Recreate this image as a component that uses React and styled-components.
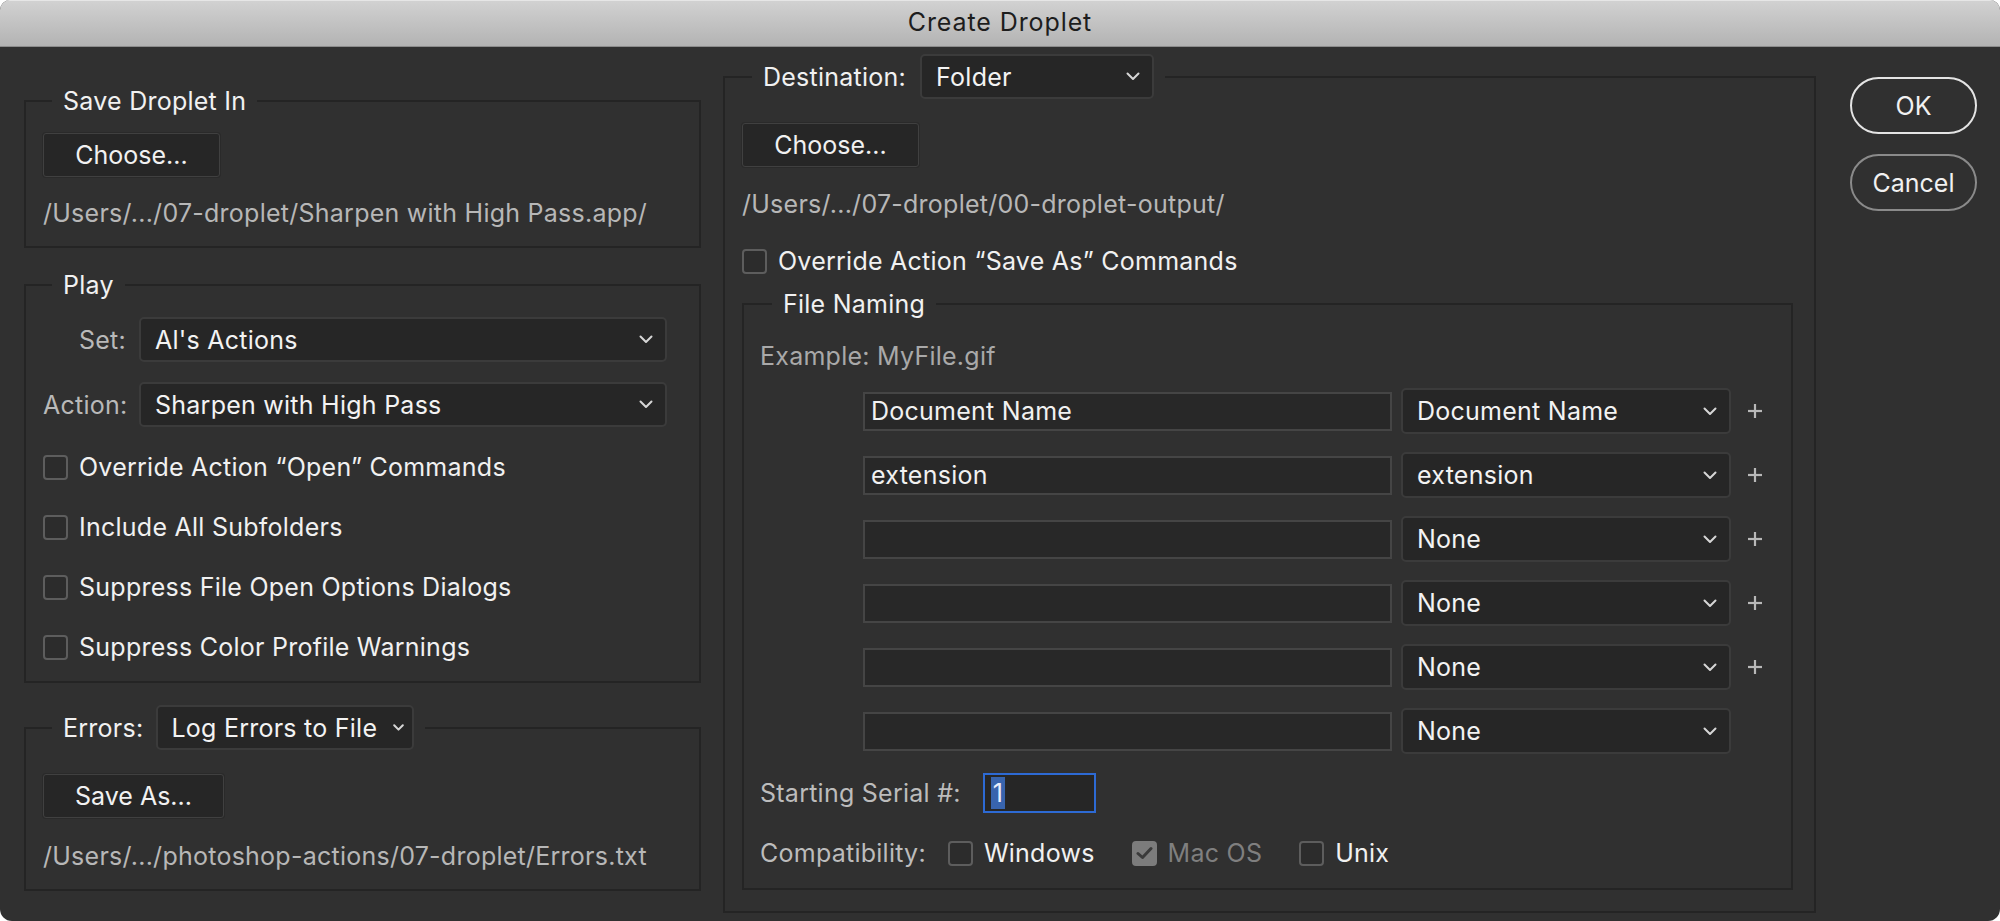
import React from "react";
import styled, { createGlobalStyle } from "styled-components";

const GlobalStyle = createGlobalStyle`
  html, body { margin: 0; padding: 0; background: #ffffff; }
  body { font-family: Inter, "Noto Sans", "Liberation Sans", sans-serif; }
  * { box-sizing: border-box; }
`;

const Window = styled.div`
  width: 2000px;
  height: 921px;
  display: flex;
  flex-direction: column;
  background: #303030;
  border-radius: 10px 10px 12px 12px;
  overflow: hidden;
  font-family: Inter, "Noto Sans", "Liberation Sans", sans-serif;
  font-size: 25px;
  letter-spacing: 0.25px;
  color: #f1f1f1;
`;

const TitleBar = styled.div`
  flex: none;
  height: 47px;
  display: flex;
  align-items: center;
  justify-content: center;
  background: linear-gradient(#d2d2d2, #b3b3b3);
  border-bottom: 1px solid #8c8c8c;
  box-shadow: inset 0 1px 0 #e6e6e6;
  color: #1d1d1d;
  font-size: 25px;
  letter-spacing: 0.9px;
  padding-bottom: 2px;
`;

const Body = styled.div`
  flex: 1;
  display: flex;
  align-items: flex-start;
  padding: 0 23px 0 24px;
`;

const LeftColumn = styled.div`
  width: 677px;
  padding-top: 39px;
  display: flex;
  flex-direction: column;
  gap: 22px;
`;

const MiddleColumn = styled.div`
  width: 1093px;
  margin-left: 22px;
  padding-top: 7px;
`;

const ActionColumn = styled.div`
  width: 127px;
  margin-left: 34px;
  padding-top: 30px;
  display: flex;
  flex-direction: column;
  gap: 20px;
`;

const Group = styled.fieldset`
  margin: 0;
  min-width: 0;
  border: 2px solid #242424;
  padding: ${(p) => p.$pad};
  display: flex;
  flex-direction: column;
  align-items: flex-start;
`;

const Legend = styled.legend`
  margin-left: ${(p) => p.$offset || "9px"};
  padding: 0 11px;
  height: ${(p) => p.$h || "30px"};
  line-height: 30px;
  display: flex;
  align-items: center;
  gap: ${(p) => p.$gap || "13px"};
  color: #f1f1f1;
`;

const PushButton = styled.button`
  width: ${(p) => p.$w}px;
  height: 44px;
  margin-top: ${(p) => p.$mt || 0}px;
  background: #262626;
  border: 1px solid #404040;
  box-shadow: 0 0 0 1px #2a2a2a;
  border-radius: 3px;
  color: #f1f1f1;
  font: inherit;
  padding: 0;
  cursor: default;
`;

const PathText = styled.div`
  margin-top: ${(p) => p.$mt}px;
  line-height: 30px;
  color: #b7b7b7;
  white-space: nowrap;
`;

const FormRow = styled.div`
  display: grid;
  grid-template-columns: 83px 528px;
  column-gap: 13px;
  align-items: center;
  margin-top: ${(p) => p.$mt || 0}px;
`;

const FieldLabel = styled.span`
  text-align: right;
  color: #b9b9b9;
  white-space: nowrap;
`;

const SelectBox = styled.div`
  width: ${(p) => p.$w}px;
  height: ${(p) => p.$h || 45}px;
  display: flex;
  align-items: center;
  justify-content: space-between;
  gap: 6px;
  padding: 0 ${(p) => p.$pr || 12}px 0 ${(p) => p.$pl || 14}px;
  background: #262626;
  border: 2px solid #3b3b3b;
  border-radius: 5px;
  color: #f3f3f3;
  white-space: nowrap;
`;

const Chevron = ({ small }) => (
  <svg
    width={small ? 11 : 14}
    height={small ? 7 : 9}
    viewBox={small ? "0 0 11 7" : "0 0 14 9"}
    fill="none"
    stroke="#d6d6d6"
    strokeWidth="2"
    strokeLinecap="round"
    strokeLinejoin="round"
    style={{ flex: "none" }}
  >
    {small ? (
      <polyline points="1.2,1.2 5.5,5.6 9.8,1.2" />
    ) : (
      <polyline points="1.5,1.5 7,7 12.5,1.5" />
    )}
  </svg>
);

const Select = ({ w, h, small, pr, pl, children }) => (
  <SelectBox $w={w} $h={h} $pr={pr} $pl={pl}>
    <span>{children}</span>
    <Chevron small={small} />
  </SelectBox>
);

const CheckList = styled.div`
  margin-top: 25px;
  display: flex;
  flex-direction: column;
  gap: 30px;
`;

const CheckRow = styled.label`
  display: flex;
  align-items: center;
  gap: 11px;
  height: 30px;
  margin-top: ${(p) => p.$mt || 0}px;
  color: ${(p) => (p.$dim ? "#7f7f7f" : "#f1f1f1")};
  white-space: nowrap;
`;

const Box = styled.span`
  flex: none;
  width: 25px;
  height: 25px;
  border-radius: 4px;
  border: 2px solid ${(p) => (p.$checked ? "#7c7c7c" : "#5d5d5d")};
  background: ${(p) => (p.$checked ? "#7c7c7c" : "#2c2c2c")};
  display: flex;
  align-items: center;
  justify-content: center;
`;

const Checkbox = ({ checked }) => (
  <Box $checked={checked}>
    {checked && (
      <svg width="17" height="14" viewBox="0 0 17 14" fill="none">
        <path
          d="M2 7.5 L6.5 11.5 L15 2.5"
          stroke="#3a3a3a"
          strokeWidth="3"
          strokeLinecap="round"
          strokeLinejoin="round"
        />
      </svg>
    )}
  </Box>
);

const NamingGroup = styled(Group)`
  width: 1051px;
  margin-top: 13px;
  align-self: stretch;
`;

const Example = styled.div`
  line-height: 30px;
  color: #a9a9a9;
`;

const NamingRows = styled.div`
  margin-top: 17px;
  margin-left: 103px;
  display: grid;
  grid-template-columns: 529px 330px 30px;
  grid-auto-rows: 46px;
  column-gap: 9px;
  row-gap: 18px;
  align-items: center;
`;

const TextField = styled.div`
  height: 39px;
  background: #282828;
  border: 2px solid #454545;
  padding-left: 6px;
  display: flex;
  align-items: center;
  color: #f1f1f1;
  white-space: nowrap;
`;

const PlusCell = styled.span`
  display: flex;
  align-items: center;
  padding-left: 8px;
`;

const Plus = () => (
  <PlusCell>
    <svg
      width="14"
      height="14"
      viewBox="0 0 14 14"
      stroke="#b8b8b8"
      strokeWidth="2.2"
      style={{ flex: "none" }}
    >
      <line x1="7" y1="0" x2="7" y2="14" />
      <line x1="0" y1="7" x2="14" y2="7" />
    </svg>
  </PlusCell>
);

const SerialRow = styled.div`
  margin-top: 19px;
  display: flex;
  align-items: center;
  gap: 22px;
`;

const GrayLabel = styled.span`
  color: #bcbcbc;
  line-height: 30px;
  white-space: nowrap;
`;

const SerialInput = styled.div`
  width: 113px;
  height: 40px;
  border: 2px solid #2d6ad4;
  background: #262626;
  padding: 2px 0 2px 6px;
  display: flex;
  align-items: stretch;
`;

const Selected = styled.span`
  background: #3864ad;
  color: #e8eefa;
  padding: 0 2px;
  display: flex;
  align-items: center;
  line-height: 1;
`;

const CompatRow = styled.div`
  margin-top: 25px;
  display: flex;
  align-items: center;
  gap: 22px;
`;

const CompatOptions = styled.div`
  display: flex;
  align-items: center;
  gap: 37px;
`;

const PillButton = styled.button`
  width: 127px;
  height: 57px;
  border-radius: 29px;
  background: #303030;
  border: 2px solid ${(p) => (p.$primary ? "#e4e4e4" : "#8a8a8a")};
  color: #f1f1f1;
  font: inherit;
  padding: 0;
  cursor: default;
`;

const namingRows = [
  { text: "Document Name", opt: "Document Name", plus: true },
  { text: "extension", opt: "extension", plus: true },
  { text: "", opt: "None", plus: true },
  { text: "", opt: "None", plus: true },
  { text: "", opt: "None", plus: true },
  { text: "", opt: "None", plus: false },
];

export default function App() {
  return (
    <>
      <GlobalStyle />
      <Window>
        <TitleBar>Create Droplet</TitleBar>
        <Body>
          <LeftColumn>
            <Group $pad="17px 17px 18px 17px">
              <Legend>Save Droplet In</Legend>
              <PushButton $w={177}>Choose...</PushButton>
              <PathText $mt={21}>/Users/.../07-droplet/Sharpen with High Pass.app/</PathText>
            </Group>

            <Group $pad="17px 17px 19px 17px">
              <Legend>Play</Legend>
              <FormRow>
                <FieldLabel>Set:</FieldLabel>
                <Select w={528}>Al's Actions</Select>
              </FormRow>
              <FormRow $mt={20}>
                <FieldLabel>Action:</FieldLabel>
                <Select w={528}>Sharpen with High Pass</Select>
              </FormRow>
              <CheckList>
                <CheckRow>
                  <Checkbox />
                  Override Action “Open” Commands
                </CheckRow>
                <CheckRow>
                  <Checkbox />
                  Include All Subfolders
                </CheckRow>
                <CheckRow>
                  <Checkbox />
                  Suppress File Open Options Dialogs
                </CheckRow>
                <CheckRow>
                  <Checkbox />
                  Suppress Color Profile Warnings
                </CheckRow>
              </CheckList>
            </Group>

            <Group $pad="24px 17px 18px 17px">
              <Legend $h="45px">
                Errors:
                <Select w={258} small pr={8} pl={13}>Log Errors to File</Select>
              </Legend>
              <PushButton $w={181} $mt={0}>Save As...</PushButton>
              <PathText $mt={23}>/Users/.../photoshop-actions/07-droplet/Errors.txt</PathText>
            </Group>
          </LeftColumn>

          <MiddleColumn>
            <Group $pad="24px 19px 21px 17px">
              <Legend $h="45px" $gap="14px" $offset="10px">
                Destination:
                <Select w={234}>Folder</Select>
              </Legend>
              <PushButton $w={177}>Choose...</PushButton>
              <PathText $mt={22}>/Users/.../07-droplet/00-droplet-output/</PathText>
              <CheckRow $mt={27}>
                <Checkbox />
                Override Action “Save As” Commands
              </CheckRow>

              <NamingGroup $pad="22px 16px 20px 16px">
                <Legend $offset="12px">File Naming</Legend>
                <Example>Example: MyFile.gif</Example>
                <NamingRows>
                  {namingRows.map((r, i) => (
                    <React.Fragment key={i}>
                      <TextField>{r.text}</TextField>
                      <Select w={330} h={46}>{r.opt}</Select>
                      {r.plus ? <Plus /> : <span />}
                    </React.Fragment>
                  ))}
                </NamingRows>
                <SerialRow>
                  <GrayLabel>Starting Serial #:</GrayLabel>
                  <SerialInput>
                    <Selected>1</Selected>
                  </SerialInput>
                </SerialRow>
                <CompatRow>
                  <GrayLabel>Compatibility:</GrayLabel>
                  <CompatOptions>
                    <CheckRow>
                      <Checkbox />
                      Windows
                    </CheckRow>
                    <CheckRow $dim>
                      <Checkbox checked />
                      Mac OS
                    </CheckRow>
                    <CheckRow>
                      <Checkbox />
                      Unix
                    </CheckRow>
                  </CompatOptions>
                </CompatRow>
              </NamingGroup>
            </Group>
          </MiddleColumn>

          <ActionColumn>
            <PillButton $primary>OK</PillButton>
            <PillButton>Cancel</PillButton>
          </ActionColumn>
        </Body>
      </Window>
    </>
  );
}
